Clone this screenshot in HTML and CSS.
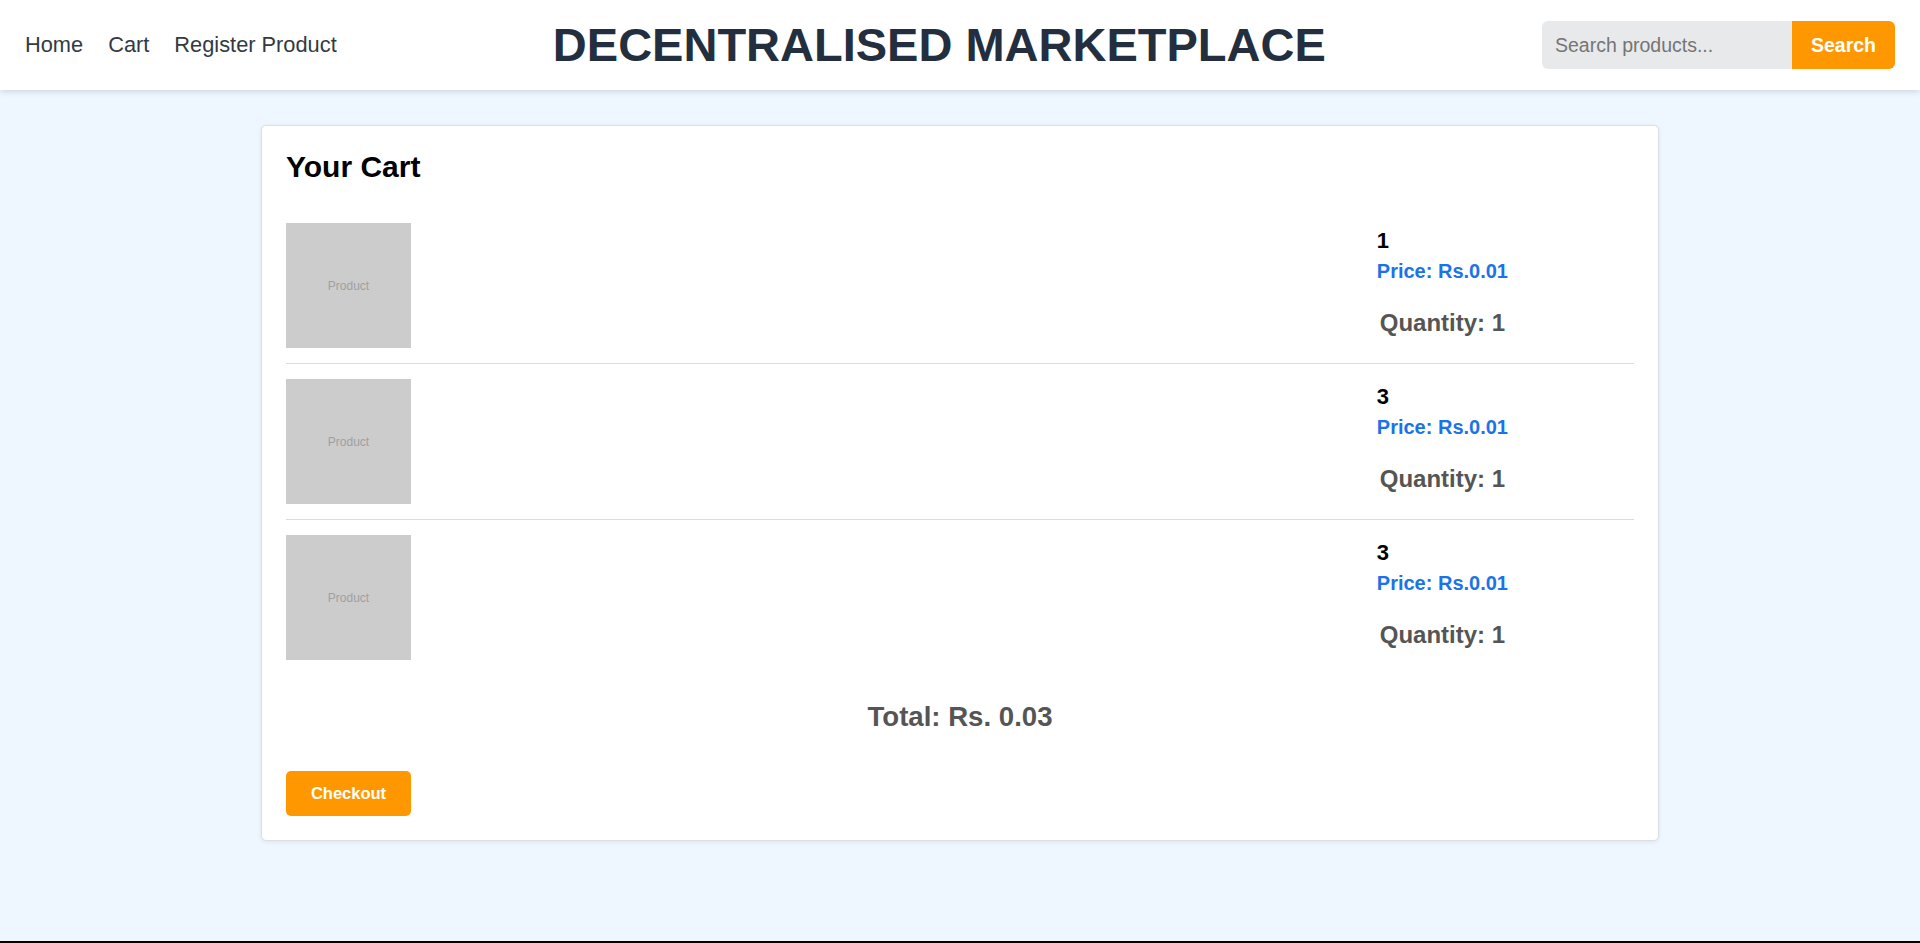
FILE: index.html
```html
<!DOCTYPE html>
<html lang="en">
<head>
<meta charset="utf-8">
<title>Decentralised Marketplace - Cart</title>
<link rel="stylesheet" href="styles.css">
</head>
<body>
<header class="navbar">
  <nav class="nav-links">
    <a href="#" class="nav-link">Home</a>
    <a href="#" class="nav-link">Cart</a>
    <a href="#" class="nav-link">Register Product</a>
  </nav>
  <h1 class="brand">DECENTRALISED MARKETPLACE</h1>
  <form class="search">
    <input class="search-input" type="text" placeholder="Search products...">
    <button class="search-btn" type="button">Search</button>
  </form>
</header>

<main class="main">
  <section class="cart-card">
    <h2 class="cart-title">Your Cart</h2>
    <div class="cart-list">
      <div class="cart-item">
        <div class="thumb">Product</div>
        <div class="item-info">
          <h3 class="item-name">1</h3>
          <p class="item-price">Price: Rs.0.01</p>
          <p class="item-qty">Quantity: 1</p>
        </div>
      </div>
      <div class="cart-item">
        <div class="thumb">Product</div>
        <div class="item-info">
          <h3 class="item-name">3</h3>
          <p class="item-price">Price: Rs.0.01</p>
          <p class="item-qty">Quantity: 1</p>
        </div>
      </div>
      <div class="cart-item">
        <div class="thumb">Product</div>
        <div class="item-info">
          <h3 class="item-name">3</h3>
          <p class="item-price">Price: Rs.0.01</p>
          <p class="item-qty">Quantity: 1</p>
        </div>
      </div>
    </div>
    <p class="cart-total">Total: Rs. 0.03</p>
    <button class="checkout-btn" type="button">Checkout</button>
  </section>
</main>

<footer class="footer"></footer>
</body>
</html>
```

FILE: styles.css
```css
* {
  box-sizing: border-box;
}

html, body {
  margin: 0;
  padding: 0;
}

body {
  font-family: "Liberation Sans", Arial, Helvetica, sans-serif;
  background: #eef6ff;
  color: #000;
  min-height: 100vh;
  display: flex;
  flex-direction: column;
}

/* ---------- Navbar ---------- */
.navbar {
  height: 90px;
  background: #ffffff;
  display: flex;
  align-items: center;
  justify-content: space-between;
  padding: 0 25px;
  box-shadow: 0 2px 6px rgba(0, 0, 0, 0.12);
  position: relative;
  z-index: 1;
}

.nav-links {
  display: flex;
  align-items: center;
  gap: 25px;
}

.nav-link {
  color: #333a42;
  text-decoration: none;
  font-size: 21.8px;
}

.brand {
  margin: 0 0 2px;
  font-size: 47px;
  font-weight: 700;
  color: #232f3e;
  letter-spacing: 0;
}

.search {
  display: flex;
  align-items: stretch;
  margin: 0;
}

.search-input {
  width: 250px;
  height: 48px;
  border: none;
  outline: none;
  background: #e8e9eb;
  border-radius: 6px 0 0 6px;
  padding: 0 13px;
  font-family: inherit;
  font-size: 19.5px;
  color: #333;
}

.search-input::placeholder {
  color: #757575;
}

.search-btn {
  height: 48px;
  border: none;
  background: #ff9800;
  color: #ffffff;
  font-family: inherit;
  font-weight: 700;
  font-size: 19.5px;
  padding: 0 19px;
  border-radius: 0 6px 6px 0;
  cursor: pointer;
}

/* ---------- Main ---------- */
.main {
  flex: 1;
  padding-top: 35px;
}

.cart-card {
  width: 1398px;
  margin: 0 auto;
  background: #ffffff;
  border: 1px solid #dcdfe3;
  border-radius: 5px;
  box-shadow: 0 1px 4px rgba(0, 0, 0, 0.08);
  padding: 24px;
}

.cart-title {
  margin: 0 0 24px;
  font-size: 30px;
  font-weight: 700;
  color: #000;
}

.cart-item {
  display: flex;
  align-items: center;
  justify-content: space-between;
  padding: 15px 0;
  border-bottom: 1px solid #dddddd;
}

.cart-item:last-child {
  border-bottom: none;
}

.thumb {
  width: 125px;
  height: 125px;
  background: #cccccc;
  color: #a0a0a0;
  font-size: 12px;
  display: flex;
  align-items: center;
  justify-content: center;
  flex-shrink: 0;
}

.item-info {
  margin-right: 126px;
  padding-top: 2px;
}

.item-name {
  margin: 0 0 6px;
  font-size: 22px;
  font-weight: 700;
  color: #000;
}

.item-price {
  margin: 0;
  font-size: 20px;
  font-weight: 700;
  color: #1a73e8;
}

.item-qty {
  margin: 26px 0 8px;
  font-size: 24px;
  font-weight: 700;
  color: #555555;
  text-align: center;
}

.cart-total {
  margin: 26px 0 0;
  text-align: center;
  font-size: 27.6px;
  font-weight: 700;
  color: #555555;
}

.checkout-btn {
  display: block;
  margin-top: 38px;
  width: 125px;
  height: 45px;
  border: none;
  border-radius: 5px;
  background: #ff9800;
  color: #ffffff;
  font-family: inherit;
  font-weight: 700;
  font-size: 16.5px;
  cursor: pointer;
}

/* ---------- Footer ---------- */
.footer {
  height: 2px;
  background: #000000;
}
```
